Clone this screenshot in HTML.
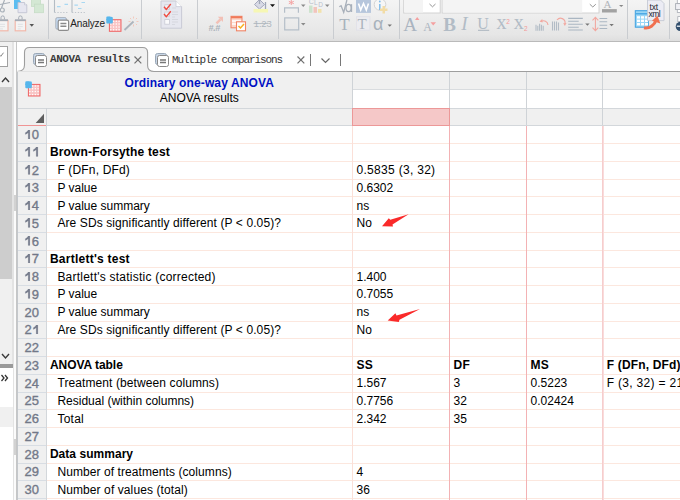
<!DOCTYPE html>
<html><head><meta charset="utf-8"><style>
html,body{margin:0;padding:0;}
body{width:680px;height:500px;overflow:hidden;position:relative;background:#fff;font-family:"Liberation Sans",sans-serif;}
body div, body svg{position:absolute;}
#tb{left:0;top:0;width:680px;height:41px;background:linear-gradient(#f4f4f4,#e6e6e6 85%,#dedede);}
#tbb{left:0;top:41px;width:680px;height:1px;background:#bababa;}
#tabbar{left:17px;top:42px;width:663px;height:29px;background:#fff;}
#left{left:0;top:42px;width:17px;height:458px;background:#f0f0f0;}
.one{position:static !important;display:inline-block;vertical-align:baseline;}
.rn{left:17px;width:29.3px;height:17.75px;line-height:17.75px;text-align:center;font-size:13px;color:#727888;-webkit-text-stroke:0.35px #727888;}
.t{height:17.75px;line-height:17.75px;font-size:12px;color:#000;white-space:pre;letter-spacing:0px;}
.n{letter-spacing:0.28px;}
.b{font-weight:bold;letter-spacing:0.14px;}
.tabt{font-family:"Liberation Mono",monospace;font-size:11px;letter-spacing:-1.1px;line-height:14px;white-space:pre;}
.ttl{text-align:center;font-size:12px;line-height:14px;white-space:pre;}
</style></head><body>
<div id="tb"></div>
<svg style="left:0;top:0" width="680" height="41" viewBox="0 0 680 41">
<!-- section 1 -->
<g stroke="#a9b1b9" fill="none" stroke-width="1.2">
<path d="M0 4.5 L10 2.5 M4.5 0 L1.5 8"/>
<circle cx="2.3" cy="10" r="2"/>
</g>
<path d="M14 0h5.5l1.5 1.5V9H14z" fill="#5cbdf0"/>
<path d="M18 2.5h6.5l2.3 2.3v7.9H18z" fill="#e6e6f0" stroke="#c2c4d2" stroke-width="0.9"/>
<path d="M24.5 2.5v2.3h2.3" fill="#fff" stroke="#c2c4d2" stroke-width="0.8"/>
<rect x="31.5" y="-1" width="9" height="7.5" fill="#d4e8d4" stroke="#c6dcc6" stroke-width="0.8"/>
<rect x="34.5" y="4.2" width="9" height="8.5" fill="#d4e8d4" stroke="#c6dcc6" stroke-width="0.8"/>
<g>
<rect x="-2.5" y="20.5" width="10.5" height="10.3" fill="#f4f4f4" stroke="#f2b8aa" stroke-width="1.2"/>
<rect x="-2.5" y="19.3" width="10.5" height="1.8" fill="#a4acb6"/>
<path d="M1 19.3v-1.7a1.7 1.7 0 0 1 3.4 0v1.7" fill="none" stroke="#a4acb6" stroke-width="1"/>
<path d="M0 24.3h5M0 26.6h5M0 28.9h3" stroke="#d0d4d8" stroke-width="0.6"/>
</g>
<g>
<rect x="15.2" y="20.5" width="10.4" height="10.3" fill="#f4f4f4" stroke="#f2b8aa" stroke-width="1.2"/>
<rect x="15" y="19.3" width="10.8" height="1.8" fill="#a4acb6"/>
<path d="M18.7 19.3v-1.7a1.7 1.7 0 0 1 3.4 0v1.7" fill="none" stroke="#a4acb6" stroke-width="1"/>
<path d="M17.8 24.3h5M17.8 26.6h5M17.8 28.9h3" stroke="#d0d4d8" stroke-width="0.6"/>
</g>
<path d="M29.5 24h4.5l-2.25 2.7z" fill="#555"/>
<!-- section 2 -->
<path d="M54.5 0v12.5M72 0v12.5" fill="none" stroke="#b4bcc4" stroke-width="1.1"/>
<path d="M54.5 12.5h14M72 12.5h14" fill="none" stroke="#c0c6cc" stroke-width="1" stroke-dasharray="1.3 1.6"/>
<path d="M57 6.7h3.5M64.5 4.3h3.5M74.4 5.2h3.5M78 8.5h3.5M81.5 2.5h3.5" stroke="#a8d8f2" stroke-width="1.2"/>
<rect x="55.8" y="17.6" width="10.6" height="11.6" rx="1.5" fill="#c6daf2" stroke="#a4acb6" stroke-width="0.9"/>
<rect x="58.2" y="20.2" width="10.4" height="10.2" rx="1.5" fill="#fff" stroke="#8c8c8c" stroke-width="1.2"/>
<path d="M60.4 23.6h6M60.4 26.3h6" stroke="#8a8a8a" stroke-width="1.5"/>
<text x="70.3" y="27.3" font-family="Liberation Sans" font-size="10" fill="#222" letter-spacing="-0.15">Analyze</text>
<g transform="translate(106,16.3)"><rect x="3.4" y="3.4" width="11.6" height="11.6" fill="#f9c4c4" stroke="#ef6464" stroke-width="1"/><g fill="#fff"><circle cx="4.80" cy="5.00" r="0.75"/><circle cx="4.80" cy="7.80" r="0.75"/><circle cx="4.80" cy="10.60" r="0.75"/><circle cx="4.80" cy="13.40" r="0.75"/><circle cx="7.55" cy="5.00" r="0.75"/><circle cx="7.55" cy="7.80" r="0.75"/><circle cx="7.55" cy="10.60" r="0.75"/><circle cx="7.55" cy="13.40" r="0.75"/><circle cx="10.30" cy="5.00" r="0.75"/><circle cx="10.30" cy="7.80" r="0.75"/><circle cx="10.30" cy="10.60" r="0.75"/><circle cx="10.30" cy="13.40" r="0.75"/><circle cx="13.05" cy="5.00" r="0.75"/><circle cx="13.05" cy="7.80" r="0.75"/><circle cx="13.05" cy="10.60" r="0.75"/><circle cx="13.05" cy="13.40" r="0.75"/></g><path d="M0.3 1.3 Q0.3 0.3 1.3 0.3 L2.5 0.3 Q3 -0.2 3.6 0.3 L6.2 0.6 Q7 0.8 6.8 1.8 L6.8 2.6 Q7.4 3.3 6.8 3.9 L6.8 6.4 Q6.6 7.2 5.8 7.2 L1.2 7.2 Q0.3 7.2 0.3 6.2 L0.3 3.9 Q-0.3 3.3 0.3 2.6 Z" fill="#56b6ec"/></g>
<path d="M124.5 30 L133.5 21.5" stroke="#acb4bc" stroke-width="1.8"/>
<g stroke="#f4c4b6" stroke-width="0.9">
<path d="M133.5 16.5v2M133.5 24.5v2M128.5 21.5h2M136.5 21.5h2M130 18l1.2 1.2M135.8 23.8l1.2 1.2M137 18l-1.2 1.2"/>
</g>
<!-- section 3: checklist -->
<path d="M161 1h15l5.6 5.6V28.2H161z" fill="#e6e7ef" stroke="#c9cbd5" stroke-width="1"/>
<path d="M176 1v5.6h5.6" fill="#fff" stroke="#c9cbd5" stroke-width="0.8"/>
<rect x="164.8" y="4.8" width="4.6" height="4.6" fill="#f2f2f6" stroke="#c8cad4" stroke-width="0.7"/>
<rect x="164.8" y="12" width="4.6" height="4.6" fill="#f2f2f6" stroke="#c8cad4" stroke-width="0.7"/>
<rect x="164.8" y="19.6" width="4.6" height="4.6" fill="#fafafc" stroke="#c8cad4" stroke-width="0.8"/>
<path d="M164 6.8l2.3 2.6 4.5-5.4M164 14l2.3 2.6 4.5-5.4" fill="none" stroke="#f04a40" stroke-width="1.4"/>
<path d="M172 8h4M172 12h6M172 14.5h6M172 17h3M172 19.5h6M172 22h6M172 24.5h3" stroke="#cfd1d9" stroke-width="0.7"/>
<!-- section 4 -->
<path d="M216.5 23.3l4-4" stroke="#f2c0b6" stroke-width="2.4"/><path d="M217.8 16.8h5.2v5.2z" fill="#f2c0b6"/>
<text x="208.6" y="31.2" font-family="Liberation Sans" font-size="9" font-weight="bold" font-style="italic" fill="#a9b1b9" letter-spacing="-0.4">#.#</text>
<rect x="231" y="16.3" width="11" height="11.5" fill="#fbd8cc" stroke="#f08466" stroke-width="1"/>
<rect x="231" y="16.3" width="11" height="2" fill="#f07a5a"/>
<path d="M232 21h9M232 24h4" stroke="#fff" stroke-width="1.5"/>
<rect x="236.5" y="21.8" width="9" height="9" fill="#fff" stroke="#f08466" stroke-width="1.1"/>
<path d="M238.5 26l2 2 3.5-4" fill="none" stroke="#f7b020" stroke-width="1.5"/>
<text x="253.8" y="27.4" font-family="Liberation Sans" font-size="9.5" fill="#b0b8c0" letter-spacing="-0.2">1.23</text>
<path d="M253.5 23.5h15" stroke="#aab2ba" stroke-width="0.8"/>
<path d="M254.5 4.5l5-5 5 5-5 4.5z" fill="#d8dae6" stroke="#a4a8bc" stroke-width="1"/>
<path d="M259.5 0v4M265.5 2v7" stroke="#a0a8b8" stroke-width="1.3"/>
<rect x="253.5" y="9" width="14.5" height="3.5" fill="#f6f7b4"/>
<path d="M270 4.3h5l-2.5 2.7z" fill="#111"/>
<!-- section 5 -->
<path d="M291.3 0v5M288.8 1.3l5 2.4M293.8 1.3l-5 2.4" stroke="#f4a4a4" stroke-width="1"/>
<path d="M284.6 12.8V7.8h13.8v5" fill="none" stroke="#b4bec8" stroke-width="1.2"/>
<path d="M301 4.5h4.5l-2.25 2.4z" fill="#8a8a8a"/>
<rect x="309" y="5.5" width="3.5" height="7.3" fill="#cde3cd"/>
<rect x="313.5" y="7" width="3.5" height="5.8" fill="#f2c4bc"/>
<rect x="318" y="9" width="3.5" height="3.8" fill="#f2e2ac"/>
<text x="308.8" y="3.6" font-family="Liberation Sans" font-size="7" fill="#b8c0cc">C</text>
<text x="314" y="5.2" font-family="Liberation Sans" font-size="6.5" fill="#b8c0cc">L</text>
<text x="318.2" y="7.2" font-family="Liberation Sans" font-size="6.5" fill="#b8c0cc">D</text>
<path d="M325 4.5h4.5l-2.25 2.4z" fill="#8a8a8a"/>
<rect x="284.7" y="17.9" width="14" height="12" fill="none" stroke="#b4bec8" stroke-width="1.2"/>
<path d="M301 23h4.5l-2.25 2.4z" fill="#8a8a8a"/>
<!-- section 6 -->
<path d="M339.3 6.8l1.8-1 2.6 6.6 3.2-12.4" fill="none" stroke="#a8b0ba" stroke-width="1.3"/><ellipse cx="348.6" cy="8" rx="2.6" ry="3.6" fill="none" stroke="#a8b0ba" stroke-width="1.3"/><path d="M351.5 4.2v7.8" stroke="#a8b0ba" stroke-width="1.3"/>
<rect x="356" y="0" width="15" height="12.9" fill="#b6c6dc"/>
<path d="M358.5 3.5l2.2 6.5 2.8-6.5 2.8 6.5 2.2-6.5" fill="none" stroke="#fff" stroke-width="1.6"/>
<circle cx="380" cy="4.5" r="5.8" fill="#f6f6f6" stroke="#cfcfcf" stroke-width="0.9"/>
<path d="M379.8 4v6" stroke="#80bcea" stroke-width="1.5"/><circle cx="379.8" cy="1.5" r="0.9" fill="#80bcea"/>
<path d="M382.5 6h2.5v2.5h2.5v2.5h-2.5v2.5h-2.5v-2.5h-2.5v-2.5h2.5z" fill="#f2dca6"/>
<text x="339.2" y="29.7" font-family="Liberation Serif" font-size="17" fill="#a8b2bc">T</text>
<rect x="356.5" y="16.7" width="13.4" height="13.4" fill="#ececf0" stroke="#e0e0e8" stroke-width="0.8"/>
<text x="357.6" y="29" font-family="Liberation Serif" font-size="15" fill="#aab2bc">T</text>
<text x="373" y="30" font-family="Liberation Sans" font-size="18" fill="#a8b2bc">α</text>
<path d="M387.6 24.4h4.3l-2.15 2.4z" fill="#777"/>
<!-- section 7 -->
<rect x="403.7" y="-1" width="36.5" height="14" fill="#fff" stroke="#d2d2d2" stroke-width="1"/>
<rect x="404.3" y="-1" width="18.7" height="13.4" fill="#f4f4f4"/>
<path d="M429.5 4l3 2.8 3-2.8" fill="none" stroke="#888" stroke-width="0.9"/>
<rect x="442.2" y="-1" width="156.8" height="14" fill="#fff" stroke="#d2d2d2" stroke-width="1"/>
<rect x="442.8" y="-1" width="139.4" height="13.4" fill="#f4f4f4"/>
<path d="M589.8 4.2l3 2.8 3-2.8" fill="none" stroke="#888" stroke-width="0.9"/>
<text x="603.5" y="8" font-family="Liberation Serif" font-size="11" fill="#b0b4ba">A</text>
<rect x="602" y="9.1" width="14.8" height="3.4" fill="#a2a2a2"/>
<path d="M619 4.9h4.4l-2.2 2.2z" fill="#888"/>
<text x="403.3" y="31" font-family="Liberation Serif" font-size="19" fill="#aab4c0">A</text>
<path d="M415 20l2.2-3 2.2 3z" fill="#f4a0a0"/>
<text x="423.3" y="31" font-family="Liberation Serif" font-size="12" fill="#aab4c0">A</text>
<path d="M430.5 22.3h5.5l-2.75 3.2z" fill="#f4a0a0"/>
<text x="443.3" y="31" font-family="Liberation Serif" font-size="19" font-weight="bold" fill="#b2bcc6">B</text>
<text x="461.3" y="30" font-family="Liberation Serif" font-size="19" font-style="italic" fill="#b2bcc6">I</text>
<text x="477.3" y="29" font-family="Liberation Serif" font-size="16" fill="#b2bcc6">U</text>
<path d="M478 30.3h11.2" stroke="#aab4be" stroke-width="1"/>
<text x="496.4" y="29.3" font-family="Liberation Serif" font-size="20" fill="#b2bcc6">x</text>
<text x="506.2" y="23.5" font-family="Liberation Sans" font-size="6.5" fill="#f49a9a">2</text>
<text x="513.7" y="29.3" font-family="Liberation Serif" font-size="20" fill="#b2bcc6">x</text>
<text x="524" y="31" font-family="Liberation Sans" font-size="6.5" fill="#f49a9a">2</text>
<path d="M536 30.7v-6M537.8 30.7v-5M539.6 30.7v-7M541.4 30.7v-6M543.2 30.7v-5" stroke="#b2bcc6" stroke-width="1.1"/>
<path d="M541 21.5a4.5 4.5 0 0 1 7 3.5" fill="none" stroke="#f2a8a0" stroke-width="1.1"/>
<path d="M539.5 21.5l2.8-2.6.2 3.6z" fill="#f2a8a0"/>
<path d="M552.5 30.5v-9M554.5 30.5v-9M556.5 30.5v-9M558.5 30.5v-8" stroke="#b2bcc6" stroke-width="1.1"/>
<path d="M557 20a4.5 4.5 0 0 1 8 3.5" fill="none" stroke="#f2a8a0" stroke-width="1.1"/>
<path d="M563.2 23.2l3.3-.3-1.6 3z" fill="#f2a8a0"/>
<path d="M568.2 18.4h14.6M568.2 21.3h10.5M568.2 24.3h14.6M568.2 27.2h10.5M568.2 30h14.6" stroke="#aab6c2" stroke-width="1.1"/>
<path d="M585.2 23.4h4.4l-2.2 2.3z" fill="#777"/>
<path d="M595.4 17.5v13M592.5 20.3l2.9-2.9 2.9 2.9M592.5 27.7l2.9 2.9 2.9-2.9" fill="none" stroke="#f2a8a0" stroke-width="1.1"/>
<path d="M599.5 18.5h7.7M599.5 21.8h7.7M599.5 25.2h7.7M599.5 28.5h7.7" stroke="#aab6c2" stroke-width="1.1"/>
<path d="M609.4 24h4.4l-2.2 2.3z" fill="#777"/>
<!-- section 8 -->
<rect x="635.3" y="10.7" width="13" height="16.5" fill="#9ad6f6" stroke="#3ea0e0" stroke-width="1"/>
<rect x="635.8" y="13.2" width="12" height="1.2" fill="#3ea0e0"/>
<g fill="#fff"><rect x="637" y="16.2" width="3" height="2.4"/><rect x="641" y="16.2" width="3" height="2.4"/><rect x="645" y="16.2" width="3" height="2.4"/>
<rect x="637" y="19.6" width="3" height="2.4"/><rect x="641" y="19.6" width="3" height="2.4"/><rect x="645" y="19.6" width="3" height="2.4"/>
<rect x="637" y="23" width="3" height="2.4"/><rect x="641" y="23" width="3" height="2.4"/><rect x="645" y="23" width="3" height="2.4"/></g>
<path d="M647.5 0h13l3.5 3.5V20.6h-16.5z" fill="#ececf4" stroke="#c4c8d4" stroke-width="0.9"/>
<text x="649.6" y="10" font-family="Liberation Sans" font-size="8.5" fill="#1e2430" letter-spacing="-0.2">txt</text>
<text x="648.4" y="16.6" font-family="Liberation Sans" font-size="8.5" fill="#1e2430" letter-spacing="-0.5">xml</text>
<path d="M644 27.8 C649.5 29 654.5 25 656.2 20" fill="none" stroke="#f07050" stroke-width="3"/>
<path d="M652 20.8l5.5-5 2.8 7.6z" fill="#f07050"/>
<!-- section 9 -->
<rect x="677.3" y="-1" width="4" height="4.6" fill="#fff" stroke="#a8acb4" stroke-width="0.8"/>
<rect x="675.6" y="3.6" width="6" height="6" fill="#f0f0f4" stroke="#a8acb4" stroke-width="0.9"/>
<rect x="677.3" y="9.6" width="4" height="2.8" fill="#fff" stroke="#a8acb4" stroke-width="0.8"/>
<rect x="677.8" y="16.6" width="4" height="5" fill="#fff" stroke="#a8acb4" stroke-width="0.8"/>
<circle cx="680.3" cy="26.4" r="4.6" fill="#34506e"/>
<path d="M676.8 26.2h4.5" stroke="#fff" stroke-width="1.2"/>
</svg>

<div style="left:48.0px;top:0px;width:1px;height:39px;background:#c9ccd0"></div>
<div style="left:141.1px;top:0px;width:1px;height:39px;background:#c9ccd0"></div>
<div style="left:197.1px;top:0px;width:1px;height:39px;background:#c9ccd0"></div>
<div style="left:277.9px;top:0px;width:1px;height:39px;background:#c9ccd0"></div>
<div style="left:333.0px;top:0px;width:1px;height:39px;background:#c9ccd0"></div>
<div style="left:399.0px;top:0px;width:1px;height:39px;background:#c9ccd0"></div>
<div style="left:627.1px;top:0px;width:1px;height:39px;background:#c9ccd0"></div>
<div style="left:669.1px;top:0px;width:1px;height:39px;background:#c9ccd0"></div>
<div id="tbb"></div>
<div id="tabbar"></div>
<svg style="left:0;top:40px" width="680" height="34" viewBox="0 40 680 34">
<path d="M17 71.5 C22 71.5 24.5 69 24.5 65 L24.5 52.5 Q24.5 47.5 29.5 47.5 L142.6 47.5 Q147.6 47.5 147.6 52.5 L147.6 65.5 C147.6 69.5 150 71.5 154 71.5 Z" fill="#f0f0f0"/>
<path d="M17 71.5 C22 71.5 24.5 69 24.5 65 L24.5 52.5 Q24.5 47.5 29.5 47.5 L142.6 47.5 Q147.6 47.5 147.6 52.5 L147.6 65.5 C147.6 69.5 150 71.5 154 71.5 L680 71.5" fill="none" stroke="#9e9e9e" stroke-width="1.1"/>
<line x1="17" y1="71.5" x2="150" y2="71.5" stroke="#e2e2e2" stroke-width="1"/>
</svg>
<svg style="left:33px;top:53px" width="14" height="14" viewBox="0 0 14 14">
<rect x="0.5" y="0.5" width="11" height="11" rx="2" fill="#c9d6e6" stroke="#9aa8b8"/>
<rect x="2.5" y="2.5" width="11" height="11" rx="2" fill="#fff" stroke="#8a8a8a"/>
<path d="M5 7h6M5 9.5h6" stroke="#777" stroke-width="1.3"/></svg>
<svg style="left:155px;top:53px" width="14" height="14" viewBox="0 0 14 14">
<rect x="0.5" y="0.5" width="11" height="11" rx="2" fill="#c9d6e6" stroke="#9aa8b8"/>
<rect x="2.5" y="2.5" width="11" height="11" rx="2" fill="#fff" stroke="#8a8a8a"/>
<path d="M5 7h6M5 9.5h6" stroke="#777" stroke-width="1.3"/></svg>
<div class="tabt" style="left:50px;top:52.4px;font-weight:bold;color:#3a3a3a;letter-spacing:-0.45px">ANOVA results</div>
<div class="tabt" style="left:172px;top:53px;color:#333">Multiple comparisons</div>
<svg style="left:0;top:40px" width="680" height="34" viewBox="0 40 680 34">
<path d="M134.5 56.5l6.8 6.8M141.3 56.5l-6.8 6.8" stroke="#707070" stroke-width="1.2"/>
<path d="M297.5 56.5l6.8 6.8M304.3 56.5l-6.8 6.8" stroke="#707070" stroke-width="1.2"/>
<path d="M310.5 54v12M340.5 54v12" stroke="#777" stroke-width="1"/>
<path d="M321.5 58.5l4 4 4-4" stroke="#666" stroke-width="1.2" fill="none"/>
</svg>
<div id="left"></div>
<div style="left:0px;top:87px;width:12px;height:192px;background:#cdcdcd"></div>
<div style="left:12px;top:42px;width:1.5px;height:458px;background:#e3e3e3"></div>
<div style="left:13.5px;top:42px;width:2.5px;height:458px;background:#fbfbfb"></div>
<div style="left:16px;top:42px;width:1px;height:458px;background:#c6c6c6"></div>
<div style="left:0px;top:46px;width:7.2px;height:18.7px;background:#fff;border-top:1px solid #a4a4a4;border-right:1px solid #a0a0a0;border-bottom:1px solid #a0a0a0"></div>
<div style="left:0px;top:364px;width:12.5px;height:4px;background:#9a9a9a"></div>
<div style="left:0px;top:368px;width:12.5px;height:39px;background:#fff"></div>
<div style="left:0px;top:407px;width:12.5px;height:20px;background:#f0f0f0"></div>
<div style="left:0px;top:427px;width:12.5px;height:73px;background:#fff"></div>
<div style="left:13.5px;top:195px;width:2.5px;height:16px;background:#d2d2d2"></div>
<div style="left:13.5px;top:439px;width:2.5px;height:16px;background:#d2d2d2"></div>
<svg style="left:0;top:40px" width="17" height="460" viewBox="0 40 17 460"><path d="M-1 54.5l1.8 1.8 2.7-3.6" stroke="#777" stroke-width="0.9" fill="none"/><path d="M2 82l3.5-4 3.5 4" stroke="#3a3a3a" stroke-width="1.4" fill="none"/><path d="M2 354l3.5 4 3.5-4" stroke="#3a3a3a" stroke-width="1.4" fill="none"/><path d="M1.5 375l2.5 3-2.5 3M5 375l2.5 3-2.5 3" stroke="#333" stroke-width="1.3" fill="none"/></svg>
<div style="left:17px;top:72px;width:663px;height:53.3px;background:#f0f0f0"></div>
<div style="left:352.4px;top:89.2px;width:330px;height:19px;background:#fff"></div>
<div style="left:17px;top:107.8px;width:663px;height:1px;background:#d3d7db"></div>
<div style="left:352.4px;top:88.8px;width:330px;height:1px;background:#d9dcdf"></div>
<div style="left:351.9px;top:72px;width:1px;height:53.3px;background:#cfd3d7"></div>
<div style="left:449.0px;top:72px;width:1px;height:53.3px;background:#cfd3d7"></div>
<div style="left:526.0px;top:72px;width:1px;height:53.3px;background:#cfd3d7"></div>
<div style="left:602.2px;top:72px;width:1px;height:53.3px;background:#cfd3d7"></div>
<div style="left:46px;top:108px;width:1px;height:17.3px;background:#cfd3d7"></div>
<svg style="left:35px;top:112.5px" width="10" height="11"><polygon points="0.7,10 9,10 9,0.7" fill="#5e5e5e"/></svg>
<div style="left:17px;top:125px;width:29.3px;height:1px;background:#f09494"></div>
<div style="left:46.3px;top:125px;width:640px;height:1px;background:#d3d7db"></div>
<div style="left:352px;top:108px;width:98px;height:18px;background:#f5c8c8;box-shadow:inset 0 0 0 1px #ec9898"></div>
<div style="left:17px;top:126px;width:29.3px;height:374px;background:#f0f0f0"></div>
<div style="left:46.3px;top:126px;width:640px;height:374px;background:#fff"></div>
<div style="left:17px;top:143px;width:29.3px;height:1px;background:#d8dde3"></div>
<div style="left:46.3px;top:143px;width:640px;height:1px;background:#fce7de"></div>
<div style="left:17px;top:161px;width:29.3px;height:1px;background:#d8dde3"></div>
<div style="left:46.3px;top:161px;width:640px;height:1px;background:#fce7de"></div>
<div style="left:17px;top:179px;width:29.3px;height:1px;background:#d8dde3"></div>
<div style="left:46.3px;top:179px;width:640px;height:1px;background:#fce7de"></div>
<div style="left:17px;top:196px;width:29.3px;height:1px;background:#d8dde3"></div>
<div style="left:46.3px;top:196px;width:640px;height:1px;background:#fce7de"></div>
<div style="left:17px;top:214px;width:29.3px;height:1px;background:#d8dde3"></div>
<div style="left:46.3px;top:214px;width:640px;height:1px;background:#fce7de"></div>
<div style="left:17px;top:232px;width:29.3px;height:1px;background:#d8dde3"></div>
<div style="left:46.3px;top:232px;width:640px;height:1px;background:#fce7de"></div>
<div style="left:17px;top:250px;width:29.3px;height:1px;background:#d8dde3"></div>
<div style="left:46.3px;top:250px;width:640px;height:1px;background:#fce7de"></div>
<div style="left:17px;top:267px;width:29.3px;height:1px;background:#d8dde3"></div>
<div style="left:46.3px;top:267px;width:640px;height:1px;background:#fce7de"></div>
<div style="left:17px;top:285px;width:29.3px;height:1px;background:#d8dde3"></div>
<div style="left:46.3px;top:285px;width:640px;height:1px;background:#fce7de"></div>
<div style="left:17px;top:303px;width:29.3px;height:1px;background:#d8dde3"></div>
<div style="left:46.3px;top:303px;width:640px;height:1px;background:#fce7de"></div>
<div style="left:17px;top:321px;width:29.3px;height:1px;background:#d8dde3"></div>
<div style="left:46.3px;top:321px;width:640px;height:1px;background:#fce7de"></div>
<div style="left:17px;top:338px;width:29.3px;height:1px;background:#d8dde3"></div>
<div style="left:46.3px;top:338px;width:640px;height:1px;background:#fce7de"></div>
<div style="left:17px;top:356px;width:29.3px;height:1px;background:#d8dde3"></div>
<div style="left:46.3px;top:356px;width:640px;height:1px;background:#fce7de"></div>
<div style="left:17px;top:374px;width:29.3px;height:1px;background:#d8dde3"></div>
<div style="left:46.3px;top:374px;width:640px;height:1px;background:#fce7de"></div>
<div style="left:17px;top:392px;width:29.3px;height:1px;background:#d8dde3"></div>
<div style="left:46.3px;top:392px;width:640px;height:1px;background:#fce7de"></div>
<div style="left:17px;top:409px;width:29.3px;height:1px;background:#d8dde3"></div>
<div style="left:46.3px;top:409px;width:640px;height:1px;background:#fce7de"></div>
<div style="left:17px;top:427px;width:29.3px;height:1px;background:#d8dde3"></div>
<div style="left:46.3px;top:427px;width:640px;height:1px;background:#fce7de"></div>
<div style="left:17px;top:445px;width:29.3px;height:1px;background:#d8dde3"></div>
<div style="left:46.3px;top:445px;width:640px;height:1px;background:#fce7de"></div>
<div style="left:17px;top:463px;width:29.3px;height:1px;background:#d8dde3"></div>
<div style="left:46.3px;top:463px;width:640px;height:1px;background:#fce7de"></div>
<div style="left:17px;top:480px;width:29.3px;height:1px;background:#d8dde3"></div>
<div style="left:46.3px;top:480px;width:640px;height:1px;background:#fce7de"></div>
<div style="left:17px;top:498px;width:29.3px;height:1px;background:#d8dde3"></div>
<div style="left:46.3px;top:498px;width:640px;height:1px;background:#fce7de"></div>
<div style="left:17px;top:516px;width:29.3px;height:1px;background:#d8dde3"></div>
<div style="left:46.3px;top:516px;width:640px;height:1px;background:#fce7de"></div>
<div style="left:46px;top:126px;width:1px;height:374px;background:#d3d7db"></div>
<div style="left:351.5px;top:126px;width:1.5px;height:374px;background:#fbe0d8"></div>
<div style="left:449px;top:126px;width:1px;height:374px;background:#f3b2b4"></div>
<div style="left:526px;top:126px;width:1px;height:374px;background:#f3b2b4"></div>
<div style="left:602px;top:126px;width:1px;height:374px;background:#f6cdcd"></div>
<div style="left:603px;top:126px;width:1px;height:374px;background:#f9dcdc"></div>
<div style="left:17px;top:72px;width:1px;height:428px;background:#c4c8cc"></div>
<div class="rn" style="top:126.10px;padding-left:0px"><svg class="one" width="7.23" height="9.4" viewBox="0 0 7.23 9.4"><path d="M4.2 0 L5.9 0 L5.9 9.4 L4.2 9.4 L4.2 2.8 Q3.1 3.8 1.3 4.4 L1.3 2.8 Q3.4 1.8 4.2 0 Z" fill="#767c8c" stroke="#767c8c" stroke-width="0.15"/></svg>0</div>
<div class="rn" style="top:143.85px;padding-left:0px"><svg class="one" width="7.23" height="9.4" viewBox="0 0 7.23 9.4"><path d="M4.2 0 L5.9 0 L5.9 9.4 L4.2 9.4 L4.2 2.8 Q3.1 3.8 1.3 4.4 L1.3 2.8 Q3.4 1.8 4.2 0 Z" fill="#767c8c" stroke="#767c8c" stroke-width="0.15"/></svg><svg class="one" width="7.23" height="9.4" viewBox="0 0 7.23 9.4"><path d="M4.2 0 L5.9 0 L5.9 9.4 L4.2 9.4 L4.2 2.8 Q3.1 3.8 1.3 4.4 L1.3 2.8 Q3.4 1.8 4.2 0 Z" fill="#767c8c" stroke="#767c8c" stroke-width="0.15"/></svg></div>
<div class="t b" style="left:49.9px;top:144.25px;letter-spacing:0.18px">Brown-Forsythe test</div>
<div class="rn" style="top:161.60px;padding-left:0px"><svg class="one" width="7.23" height="9.4" viewBox="0 0 7.23 9.4"><path d="M4.2 0 L5.9 0 L5.9 9.4 L4.2 9.4 L4.2 2.8 Q3.1 3.8 1.3 4.4 L1.3 2.8 Q3.4 1.8 4.2 0 Z" fill="#767c8c" stroke="#767c8c" stroke-width="0.15"/></svg>2</div>
<div class="t" style="left:57.4px;top:162.00px;letter-spacing:0.16px">F (DFn, DFd)</div>
<div class="t" style="left:356.5px;top:162.00px;letter-spacing:0.3px">0.5835 (3, 32)</div>
<div class="rn" style="top:179.35px;padding-left:0px"><svg class="one" width="7.23" height="9.4" viewBox="0 0 7.23 9.4"><path d="M4.2 0 L5.9 0 L5.9 9.4 L4.2 9.4 L4.2 2.8 Q3.1 3.8 1.3 4.4 L1.3 2.8 Q3.4 1.8 4.2 0 Z" fill="#767c8c" stroke="#767c8c" stroke-width="0.15"/></svg>3</div>
<div class="t" style="left:57.4px;top:179.75px;letter-spacing:0.0px">P value</div>
<div class="t" style="left:356.5px;top:179.75px;letter-spacing:0.0px">0.6302</div>
<div class="rn" style="top:197.10px;padding-left:0px"><svg class="one" width="7.23" height="9.4" viewBox="0 0 7.23 9.4"><path d="M4.2 0 L5.9 0 L5.9 9.4 L4.2 9.4 L4.2 2.8 Q3.1 3.8 1.3 4.4 L1.3 2.8 Q3.4 1.8 4.2 0 Z" fill="#767c8c" stroke="#767c8c" stroke-width="0.15"/></svg>4</div>
<div class="t" style="left:57.4px;top:197.50px;letter-spacing:0.0px">P value summary</div>
<div class="t" style="left:356.5px;top:197.50px;letter-spacing:0.0px">ns</div>
<div class="rn" style="top:214.85px;padding-left:0px"><svg class="one" width="7.23" height="9.4" viewBox="0 0 7.23 9.4"><path d="M4.2 0 L5.9 0 L5.9 9.4 L4.2 9.4 L4.2 2.8 Q3.1 3.8 1.3 4.4 L1.3 2.8 Q3.4 1.8 4.2 0 Z" fill="#767c8c" stroke="#767c8c" stroke-width="0.15"/></svg>5</div>
<div class="t" style="left:57.4px;top:215.25px;letter-spacing:0.1px">Are SDs significantly different (P &lt; 0.05)?</div>
<div class="t" style="left:356.5px;top:215.25px;letter-spacing:0.0px">No</div>
<div class="rn" style="top:232.60px;padding-left:0px"><svg class="one" width="7.23" height="9.4" viewBox="0 0 7.23 9.4"><path d="M4.2 0 L5.9 0 L5.9 9.4 L4.2 9.4 L4.2 2.8 Q3.1 3.8 1.3 4.4 L1.3 2.8 Q3.4 1.8 4.2 0 Z" fill="#767c8c" stroke="#767c8c" stroke-width="0.15"/></svg>6</div>
<div class="rn" style="top:250.35px;padding-left:0px"><svg class="one" width="7.23" height="9.4" viewBox="0 0 7.23 9.4"><path d="M4.2 0 L5.9 0 L5.9 9.4 L4.2 9.4 L4.2 2.8 Q3.1 3.8 1.3 4.4 L1.3 2.8 Q3.4 1.8 4.2 0 Z" fill="#767c8c" stroke="#767c8c" stroke-width="0.15"/></svg>7</div>
<div class="t b" style="left:49.9px;top:250.75px;letter-spacing:0.25px">Bartlett's test</div>
<div class="rn" style="top:268.10px;padding-left:0px"><svg class="one" width="7.23" height="9.4" viewBox="0 0 7.23 9.4"><path d="M4.2 0 L5.9 0 L5.9 9.4 L4.2 9.4 L4.2 2.8 Q3.1 3.8 1.3 4.4 L1.3 2.8 Q3.4 1.8 4.2 0 Z" fill="#767c8c" stroke="#767c8c" stroke-width="0.15"/></svg>8</div>
<div class="t" style="left:57.4px;top:268.50px;letter-spacing:0.23px">Bartlett's statistic (corrected)</div>
<div class="t" style="left:356.5px;top:268.50px;letter-spacing:0.0px">1.400</div>
<div class="rn" style="top:285.85px;padding-left:0px"><svg class="one" width="7.23" height="9.4" viewBox="0 0 7.23 9.4"><path d="M4.2 0 L5.9 0 L5.9 9.4 L4.2 9.4 L4.2 2.8 Q3.1 3.8 1.3 4.4 L1.3 2.8 Q3.4 1.8 4.2 0 Z" fill="#767c8c" stroke="#767c8c" stroke-width="0.15"/></svg>9</div>
<div class="t" style="left:57.4px;top:286.25px;letter-spacing:0.0px">P value</div>
<div class="t" style="left:356.5px;top:286.25px;letter-spacing:0.0px">0.7055</div>
<div class="rn" style="top:303.60px;padding-left:0px">20</div>
<div class="t" style="left:57.4px;top:304.00px;letter-spacing:0.0px">P value summary</div>
<div class="t" style="left:356.5px;top:304.00px;letter-spacing:0.0px">ns</div>
<div class="rn" style="top:321.35px;padding-left:0px">2<svg class="one" width="7.23" height="9.4" viewBox="0 0 7.23 9.4"><path d="M4.2 0 L5.9 0 L5.9 9.4 L4.2 9.4 L4.2 2.8 Q3.1 3.8 1.3 4.4 L1.3 2.8 Q3.4 1.8 4.2 0 Z" fill="#767c8c" stroke="#767c8c" stroke-width="0.15"/></svg></div>
<div class="t" style="left:57.4px;top:321.75px;letter-spacing:0.1px">Are SDs significantly different (P &lt; 0.05)?</div>
<div class="t" style="left:356.5px;top:321.75px;letter-spacing:0.0px">No</div>
<div class="rn" style="top:339.10px;padding-left:0px">22</div>
<div class="rn" style="top:356.85px;padding-left:0px">23</div>
<div class="t b" style="left:49.9px;top:357.25px;letter-spacing:-0.04px">ANOVA table</div>
<div class="t b" style="left:356.5px;top:357.25px;letter-spacing:0.14px">SS</div>
<div class="t b" style="left:453.6px;top:357.25px;letter-spacing:0.14px">DF</div>
<div class="t b" style="left:530.6px;top:357.25px;letter-spacing:0.14px">MS</div>
<div class="t b" style="left:606.8px;top:357.25px;letter-spacing:0.16px">F (DFn, DFd)</div>
<div class="rn" style="top:374.60px;padding-left:0px">24</div>
<div class="t" style="left:57.4px;top:375.00px;letter-spacing:0.1px">Treatment (between columns)</div>
<div class="t" style="left:356.5px;top:375.00px;letter-spacing:0.0px">1.567</div>
<div class="t" style="left:453.6px;top:375.00px;letter-spacing:0.0px">3</div>
<div class="t" style="left:530.6px;top:375.00px;letter-spacing:0.0px">0.5223</div>
<div class="t" style="left:606.8px;top:375.00px;letter-spacing:0.3px">F (3, 32) = 21.81</div>
<div class="rn" style="top:392.35px;padding-left:0px">25</div>
<div class="t" style="left:57.4px;top:392.75px;letter-spacing:0.0px">Residual (within columns)</div>
<div class="t" style="left:356.5px;top:392.75px;letter-spacing:0.0px">0.7756</div>
<div class="t" style="left:453.6px;top:392.75px;letter-spacing:0.0px">32</div>
<div class="t" style="left:530.6px;top:392.75px;letter-spacing:0.0px">0.02424</div>
<div class="rn" style="top:410.10px;padding-left:0px">26</div>
<div class="t" style="left:57.4px;top:410.50px;letter-spacing:0.25px">Total</div>
<div class="t" style="left:356.5px;top:410.50px;letter-spacing:0.0px">2.342</div>
<div class="t" style="left:453.6px;top:410.50px;letter-spacing:0.0px">35</div>
<div class="rn" style="top:427.85px;padding-left:0px">27</div>
<div class="rn" style="top:445.60px;padding-left:0px">28</div>
<div class="t b" style="left:49.9px;top:446.00px;letter-spacing:0.04px">Data summary</div>
<div class="rn" style="top:463.35px;padding-left:0px">29</div>
<div class="t" style="left:57.4px;top:463.75px;letter-spacing:0.08px">Number of treatments (columns)</div>
<div class="t" style="left:356.5px;top:463.75px;letter-spacing:0.0px">4</div>
<div class="rn" style="top:481.10px;padding-left:0px">30</div>
<div class="t" style="left:57.4px;top:481.50px;letter-spacing:0.1px">Number of values (total)</div>
<div class="t" style="left:356.5px;top:481.50px;letter-spacing:0.0px">36</div>
<div class="ttl" style="left:46.3px;top:76.4px;width:306px;color:#0010c4;font-weight:bold;letter-spacing:0.13px">Ordinary one-way ANOVA</div>
<div class="ttl" style="left:46.3px;top:91px;width:306px;color:#000">ANOVA results</div>
<svg style="left:25px;top:81px" width="16" height="16" viewBox="0 0 16 16"><rect x="3.4" y="3.4" width="11.6" height="11.6" fill="#f9c4c4" stroke="#ef6464" stroke-width="1"/><g fill="#fff"><circle cx="4.80" cy="5.00" r="0.75"/><circle cx="4.80" cy="7.80" r="0.75"/><circle cx="4.80" cy="10.60" r="0.75"/><circle cx="4.80" cy="13.40" r="0.75"/><circle cx="7.55" cy="5.00" r="0.75"/><circle cx="7.55" cy="7.80" r="0.75"/><circle cx="7.55" cy="10.60" r="0.75"/><circle cx="7.55" cy="13.40" r="0.75"/><circle cx="10.30" cy="5.00" r="0.75"/><circle cx="10.30" cy="7.80" r="0.75"/><circle cx="10.30" cy="10.60" r="0.75"/><circle cx="10.30" cy="13.40" r="0.75"/><circle cx="13.05" cy="5.00" r="0.75"/><circle cx="13.05" cy="7.80" r="0.75"/><circle cx="13.05" cy="10.60" r="0.75"/><circle cx="13.05" cy="13.40" r="0.75"/></g><path d="M0.3 1.3 Q0.3 0.3 1.3 0.3 L2.5 0.3 Q3 -0.2 3.6 0.3 L6.2 0.6 Q7 0.8 6.8 1.8 L6.8 2.6 Q7.4 3.3 6.8 3.9 L6.8 6.4 Q6.6 7.2 5.8 7.2 L1.2 7.2 Q0.3 7.2 0.3 6.2 L0.3 3.9 Q-0.3 3.3 0.3 2.6 Z" fill="#56b6ec"/></svg>
<svg style="left:0;top:0" width="680" height="500"><polygon points="382,226.3 388.8,218.3 390.3,219.8 408.6,214.2 392.5,224.5 393,226.5" fill="#fa2a2a"/><polygon points="387.7,320.6 395.4,313.2 396.5,315.4 420,309 399.5,319.7 398.8,322" fill="#fa2a2a"/></svg>
</body></html>
